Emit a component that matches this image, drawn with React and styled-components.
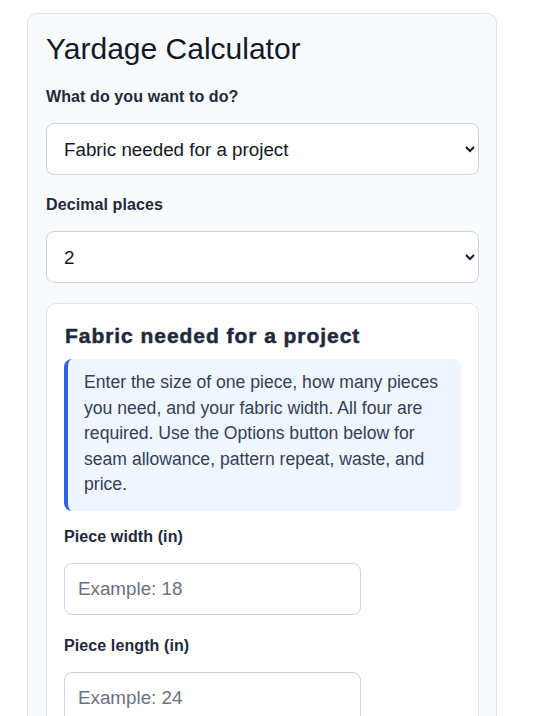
import React, { useState } from "react";
import styled, { createGlobalStyle } from "styled-components";

const GlobalStyle = createGlobalStyle`
  body {
    margin: 0;
    background: #ffffff;
    font-family: "Liberation Sans", Arial, sans-serif;
    color: #1e293b;
  }
`;

const Page = styled.div`
  padding: 13px 0 0 27px;
`;

const Card = styled.div`
  box-sizing: border-box;
  width: 470px;
  background: #f8fafc;
  border: 1px solid #dde3ea;
  border-radius: 10px;
  padding: 18px 17px 24px 18px;
`;

const Title = styled.h1`
  margin: 0 0 22px;
  font-size: 30px;
  font-weight: 400;
  line-height: 34px;
  color: #111827;
`;

const Field = styled.div`
  margin-bottom: ${(p) => p.$gap || "21px"};
`;

const Label = styled.label`
  display: block;
  margin-bottom: 17px;
  font-size: 16px;
  font-weight: 700;
  line-height: 18px;
  letter-spacing: 0.1px;
  color: #1e293b;
`;

const Select = styled.select`
  display: block;
  width: 100%;
  height: 52px;
  padding: 0 13px;
  font-family: inherit;
  font-size: 18.8px;
  color: #111827;
  background: #ffffff;
  border: 1px solid #cbd5e1;
  border-radius: 8px;
`;

const Panel = styled.section`
  background: #ffffff;
  border: 1px solid #dbe4f0;
  border-radius: 10px;
  padding: 19px 17px 20px 17px;
`;

const PanelTitle = styled.h2`
  margin: 0 0 10px;
  padding-left: 1px;
  font-size: 21px;
  font-weight: 900;
  line-height: 26px;
  letter-spacing: 0.95px;
  -webkit-text-stroke: 0.5px currentColor;
  color: #1e293b;
`;

const Note = styled.p`
  margin: 0 0 17px;
  padding: 11px 16px 13px 16px;
  background: #eff6ff;
  border-left: 4px solid #2f62e6;
  border-radius: 8px;
  font-size: 17.6px;
  line-height: 25.5px;
  color: #334155;
`;

const Input = styled.input`
  display: block;
  box-sizing: border-box;
  width: 297px;
  height: 52px;
  padding: 0 13px;
  font-family: inherit;
  font-size: 18.8px;
  color: #111827;
  background: #ffffff;
  border: 1px solid #cbd5e1;
  border-radius: 8px;

  &::placeholder {
    color: #6b7280;
  }
`;

export default function App() {
  const [mode, setMode] = useState("project");
  const [decimals, setDecimals] = useState("2");

  return (
    <Page>
      <GlobalStyle />
      <Card>
        <Title>Yardage Calculator</Title>
        <Field>
          <Label htmlFor="mode">What do you want to do?</Label>
          <Select id="mode" value={mode} onChange={(e) => setMode(e.target.value)}>
            <option value="project">Fabric needed for a project</option>
            <option value="convert">Convert yards and inches</option>
          </Select>
        </Field>
        <Field $gap="20px">
          <Label htmlFor="decimals">Decimal places</Label>
          <Select id="decimals" value={decimals} onChange={(e) => setDecimals(e.target.value)}>
            <option value="0">0</option>
            <option value="1">1</option>
            <option value="2">2</option>
            <option value="3">3</option>
          </Select>
        </Field>
        <Panel>
          <PanelTitle>Fabric needed for a project</PanelTitle>
          <Note>
            Enter the size of one piece, how many pieces you need, and your fabric width. All four
            are required. Use the Options button below for seam allowance, pattern repeat, waste,
            and price.
          </Note>
          <Field $gap="22px">
            <Label htmlFor="pw">Piece width (in)</Label>
            <Input id="pw" type="number" placeholder="Example: 18" />
          </Field>
          <Field $gap="0">
            <Label htmlFor="pl">Piece length (in)</Label>
            <Input id="pl" type="number" placeholder="Example: 24" />
          </Field>
        </Panel>
      </Card>
    </Page>
  );
}
